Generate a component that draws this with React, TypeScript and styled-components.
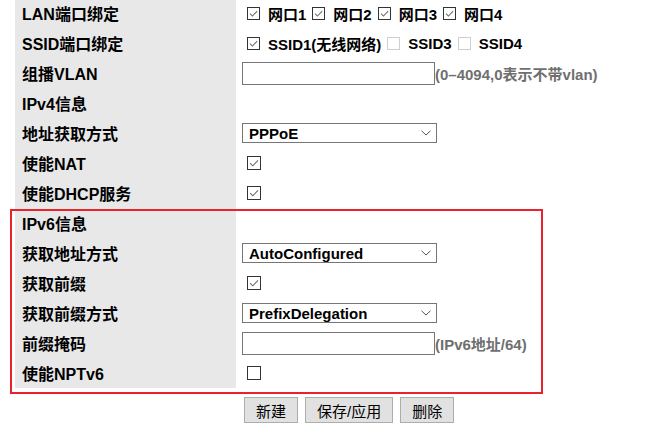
import React from 'react';
import styled, { createGlobalStyle } from 'styled-components';

const GlobalStyle = createGlobalStyle`
  html, body {
    margin: 0;
    padding: 0;
    background: #ffffff;
  }
  body {
    font-family: "Liberation Sans", Arial, "Noto Sans CJK SC", sans-serif;
    color: #000000;
  }
`;

const FONT = `"Liberation Sans", Arial, "Noto Sans CJK SC", sans-serif`;

interface CheckItem {
  label: string;
  checked: boolean;
  disabled?: boolean;
}

const lanPorts: CheckItem[] = [
  { label: '网口1', checked: true },
  { label: '网口2', checked: true },
  { label: '网口3', checked: true },
  { label: '网口4', checked: true },
];

const ssidPorts: CheckItem[] = [
  { label: 'SSID1(无线网络)', checked: true },
  { label: 'SSID3', checked: false, disabled: true },
  { label: 'SSID4', checked: false, disabled: true },
];

const CheckMark: React.FC<{ size: number }> = ({ size }) => (
  <svg width={size - 2} height={size - 2} viewBox="0 0 12 12">
    <polyline
      points="2.2,6.2 4.8,8.8 10,3.4"
      fill="none"
      stroke="#6b6b6b"
      strokeWidth="1.1"
    />
  </svg>
);

const Box: React.FC<{ checked: boolean; disabled?: boolean; size?: number }> = ({
  checked,
  disabled,
  size = 13,
}) => (
  <BoxFrame $disabled={disabled} $size={size}>
    {checked && <CheckMark size={size} />}
  </BoxFrame>
);

const Select: React.FC<{ value: string }> = ({ value }) => (
  <SelectBox>
    <span>{value}</span>
    <svg width="10" height="6" viewBox="0 0 10 6">
      <polyline points="0.5,0.8 5,5 9.5,0.8" fill="none" stroke="#555" strokeWidth="1" />
    </svg>
  </SelectBox>
);

const App: React.FC = () => {
  return (
    <>
      <GlobalStyle />
      <Form>
        <Row>
          <Label>LAN端口绑定</Label>
          <Value>
            {lanPorts.map((p) => (
              <Item key={p.label}>
                <Box checked={p.checked} />
                <ItemText>{p.label}</ItemText>
              </Item>
            ))}
          </Value>
        </Row>
        <Row>
          <Label>SSID端口绑定</Label>
          <Value>
            {ssidPorts.map((p) => (
              <Item key={p.label}>
                <Box checked={p.checked} disabled={p.disabled} />
                <ItemText>{p.label}</ItemText>
              </Item>
            ))}
          </Value>
        </Row>
        <Row>
          <Label>组播VLAN</Label>
          <Value>
            <TextInput type="text" />
            <Hint>(0–4094,0表示不带vlan)</Hint>
          </Value>
        </Row>
        <Row>
          <Label>IPv4信息</Label>
          <Value />
        </Row>
        <Row>
          <Label>地址获取方式</Label>
          <Value>
            <Select value="PPPoE" />
          </Value>
        </Row>
        <Row>
          <Label>使能NAT</Label>
          <Value>
            <Single>
              <Box checked size={14} />
            </Single>
          </Value>
        </Row>
        <Row>
          <Label>使能DHCP服务</Label>
          <Value>
            <Single>
              <Box checked size={14} />
            </Single>
          </Value>
        </Row>

        <Section>
          <Row>
            <Label>IPv6信息</Label>
            <Value />
          </Row>
          <Row>
            <Label>获取地址方式</Label>
            <Value>
              <Select value="AutoConfigured" />
            </Value>
          </Row>
          <Row>
            <Label>获取前缀</Label>
            <Value>
              <Single>
                <Box checked size={14} />
              </Single>
            </Value>
          </Row>
          <Row>
            <Label>获取前缀方式</Label>
            <Value>
              <Select value="PrefixDelegation" />
            </Value>
          </Row>
          <Row>
            <Label>前缀掩码</Label>
            <Value>
              <TextInput type="text" />
              <Hint>(IPv6地址/64)</Hint>
            </Value>
          </Row>
          <Row>
            <Label>使能NPTv6</Label>
            <Value>
              <Single>
                <Box checked={false} size={14} />
              </Single>
            </Value>
          </Row>
          <Highlight />
        </Section>

        <ButtonBar>
          <Button>新建</Button>
          <Button>保存/应用</Button>
          <Button>删除</Button>
        </ButtonBar>
      </Form>
    </>
  );
};

const Form = styled.div`
  margin: -2px 0 0 15px;
  width: 640px;
`;

const Section = styled.div`
  position: relative;
`;

const Highlight = styled.div`
  position: absolute;
  top: 1px;
  left: -5px;
  width: 533px;
  bottom: -6px;
  border: 2px solid #e8232b;
  box-sizing: border-box;
  pointer-events: none;
`;

const Row = styled.div`
  display: grid;
  grid-template-columns: 221px 1fr;
  height: 30px;
`;

const Label = styled.div`
  display: flex;
  align-items: center;
  padding-left: 7px;
  background: #e8e8e8;
  font-family: ${FONT};
  font-size: 16px;
  font-weight: bold;
  white-space: nowrap;
`;

const Value = styled.div`
  display: flex;
  align-items: center;
  padding-left: 6px;
  white-space: nowrap;
`;

const Item = styled.span`
  display: inline-flex;
  align-items: center;
  margin-right: 6px;

  &:first-child {
    margin-left: 5px;
  }
`;

const Single = styled.span`
  display: inline-flex;
  align-items: center;
  margin-left: 5px;
`;

const BoxFrame = styled.span<{ $disabled?: boolean; $size: number }>`
  display: inline-flex;
  align-items: center;
  justify-content: center;
  width: ${(p) => p.$size}px;
  height: ${(p) => p.$size}px;
  box-sizing: border-box;
  border: 1px solid ${(p) => (p.$disabled ? '#cfcfcf' : '#333333')};
  background: #ffffff;
`;

const ItemText = styled.span`
  margin-left: 8px;
  font-family: ${FONT};
  font-size: 15px;
  font-weight: bold;
`;

const TextInput = styled.input`
  width: 193px;
  height: 23px;
  box-sizing: border-box;
  margin: 0;
  padding: 0 4px;
  border: 1px solid #767676;
  background: #ffffff;
  font-family: ${FONT};
  font-size: 15px;
  outline: none;
`;

const Hint = styled.span`
  font-family: ${FONT};
  font-size: 15px;
  font-weight: bold;
  color: #6f6f6f;
`;

const SelectBox = styled.div`
  display: flex;
  align-items: center;
  justify-content: space-between;
  width: 195px;
  height: 20px;
  box-sizing: border-box;
  padding: 0 5px 0 6px;
  border: 1px solid #767676;
  background: #ffffff;
  font-family: ${FONT};
  font-size: 15px;
  font-weight: bold;
`;

const ButtonBar = styled.div`
  display: flex;
  gap: 7px;
  margin-top: 9px;
  padding-left: 229px;
`;

const Button = styled.button`
  height: 26px;
  margin: 0;
  padding: 0 11px;
  border: 1px solid #adadad;
  background: #e1e1e1;
  color: #000000;
  font-family: ${FONT};
  font-size: 15px;
  cursor: pointer;
`;

export default App;
